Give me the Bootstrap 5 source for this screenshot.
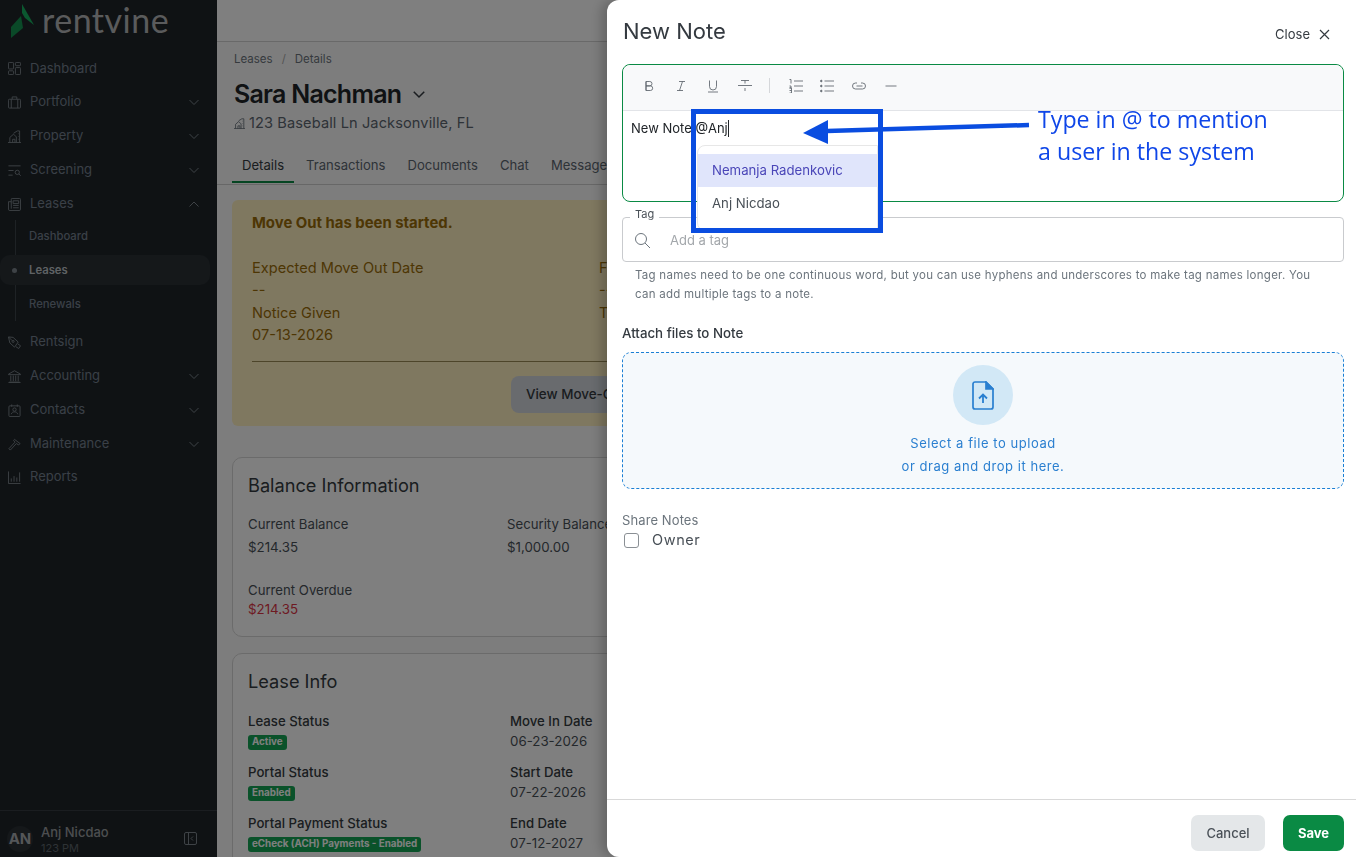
<!DOCTYPE html>
<html lang="en">
<head>
<meta charset="utf-8">
<title>New Note</title>
<link href="https://cdn.jsdelivr.net/npm/bootstrap@5.3.0/dist/css/bootstrap.min.css" rel="stylesheet">
<style>
html,body{height:100%}
body{font-family:Inter,"Liberation Sans",sans-serif;overflow:hidden;background:#fbfbfb;color:#212529;font-size:14px}
.app-shell{height:857px;overflow:hidden}
.side-rail{width:217px;flex:none;background:#1f2529;color:#74808f}
.brand-row{height:40px;padding-left:11px;gap:7px;margin-bottom:12px}
.brand-name{font-family:Lato,sans-serif;font-size:34px;line-height:40px;color:#b4b6b8;font-weight:400;letter-spacing:.5px;margin-top:-1px}
.rail-link{height:34px;padding:0 17px 0 8px;color:#74808f;text-decoration:none;font-size:13px;gap:9px}
.rail-first{height:33px}
.rail-last{height:32px}
.rail-link svg.ico{width:13px;height:13px;flex:none;color:#7c858d}
.rail-link .chev{width:12px;height:12px;margin-left:auto;color:#7c858d}
.rail-sub{position:relative;font-weight:500;margin-top:-2px;margin-bottom:4px}
.rail-sub::before{content:"";position:absolute;left:15px;top:1px;bottom:0;border-left:1px solid #3c444a}
.sub-link{height:34px;padding-left:29px;color:#74808f;text-decoration:none;position:relative;font-size:11.3px}
.sub-on{background:#2a3035;border-radius:10px;margin-right:7px;height:30px;margin-top:2px;margin-bottom:2px;color:#bfc4c9;font-weight:600;z-index:1}
.sub-on::before{content:"";position:absolute;left:12px;top:13px;width:5px;height:5px;border-radius:50%;background:#7c858d}
.rail-foot{border-top:1px solid #343b40;height:47px;padding:8px 20px 0 7px}
.av-round{width:26px;height:26px;border-radius:50%;background:#2a3035;color:#a9adb0;font-weight:700;font-size:15px;flex:none;margin-top:7px}
.who-name{font-size:13px;color:#999da0;line-height:17px;font-weight:500;margin-top:5px}
.who-sub{font-size:11px;color:#5d656b;line-height:15px}
.foot-tog{margin-top:13px;flex:none}
.work-col{min-width:0;background:#fbfbfb}
.top-strip{height:42px;border-bottom:1px solid #d3d3d3;background:#fff;flex:none}
.page-head{padding:10px 15px 0 17px;border-bottom:1px solid #cfcfcf;height:143px;flex:none}
.crumbs{font-size:11.5px;color:#6c757d;line-height:14px;gap:9px}
.crumbs i{font-style:normal;color:#aaa}
.person-name{font-size:25px;font-weight:600;letter-spacing:-.75px;line-height:34px;margin:11px 0 0;gap:11px}
.addr{font-size:14.6px;color:#5c6670;line-height:22px;margin-top:1px;letter-spacing:.1px;gap:4px}
.tab-row{margin-top:20px;gap:0;margin-left:-2px;flex-wrap:nowrap;white-space:nowrap}
.tab-item{padding:0 12px 9px 10px;color:#5c6670;font-size:13.1px;line-height:18px}
.tab-on{border-bottom:2px solid #0a8a44;color:#343a40;height:29px;padding:2px 10px 0;margin-right:2px}
.tab-plain{padding-top:2px}
.notice-box{margin:15px 0 0 15px;background:#fff0c0;border-radius:6px;height:226px;padding:14px 0 14px 20px;color:#9a6c08;width:753px;flex:none;overflow:hidden}
.notice-title{font-weight:700;line-height:18px;margin-bottom:25px;font-size:14.9px}
.notice-grid{width:694px}
.notice-line{line-height:22.4px;font-size:14.6px}
.notice-rule{border-top:1px solid #9a8b55;margin:14px 0;width:700px}
.pale-btn{background:#d2d7dd;color:#343a40;font-size:13.4px;font-weight:500;border-radius:8px;padding:0 15px;height:37px;margin-left:259px;width:150px;white-space:nowrap;line-height:37px;border:0;text-align:left}
.info-panel{margin:31px 0 0 15px;border:1px solid #d7d7d7;border-radius:10px;background:#fff;width:700px;flex:none;padding:15px 15px 18px}
.panel-head{font-size:18.2px;font-weight:400;line-height:24px;margin:0 0 19px;color:#343a40}
.lease-panel .panel-head{margin-bottom:20px}
.lbl{font-size:13.2px;color:#495057;line-height:16px}
.val{font-size:13.3px;color:#495057;line-height:18px}
.val-gap{margin-top:6px}
.val-tight{margin-top:2px}
.bal-col{width:259px;flex:none}
.over-row{margin-top:26px}
.lease-col{width:262px;flex:none}
.lbl-b{font-size:13.2px;font-weight:500;color:#343a40;line-height:16px}
.lbl-next{margin-top:14px}
.val-date{margin-top:3px}
.pill-slot{height:21px}
.green-pill{background:#15a555;color:#fff;font-size:9.8px;font-weight:700;border-radius:3px;padding:0 4px;line-height:14px;height:15px;display:inline-block;white-space:nowrap}
.shade{opacity:.5!important}
.note-panel{width:749px!important;border-left:0!important;border-radius:12px 0 0 12px;box-shadow:-6px 0 12px rgba(0,0,0,.2)}
.note-head{padding:15px 12px 0 16px;height:64px;flex:none}
.note-title{font-size:22px;font-weight:400;line-height:33px;color:#343a40;margin:0}
.close-tx{font-size:13px;color:#343a40;background:none;border:0;padding:0;gap:9px;margin-top:10px;margin-right:14px}
.note-body{padding:0 12px 0 15px;flex:1;position:relative}
.editor-box{border:1px solid #0a8a44;border-radius:8px;height:138px;position:relative}
.edit-bar{height:46px;background:#f8f9fa;border-bottom:1px solid #e2e4e8;border-radius:8px 8px 0 0;padding:0 0 4px 19px;gap:18px}
.edit-bar svg{width:14px;height:14px;color:#5c636a;flex:none;stroke-width:.85}
.edit-bar .edit-ol{margin-right:-1px}
.tool-sep{width:1px;height:15px;background:#d5d7da;margin:0 1px 0 -1px}
.edit-text{padding:8px 8px;font-size:13px;line-height:19px;color:#212529}
.caret-bar{border-left:1px solid #212529;display:inline-block;height:17px;vertical-align:-4px}
.mention-menu{position:absolute;left:74px;top:80px;width:181px;background:#fff;border:1px solid #e7e7e7;border-radius:8px 0 0 8px;padding:8px 0 0;height:86px;z-index:3}
.mention-on{background:#e0e5fb;color:#4a46b8;height:33px;padding-left:14px;font-size:13.2px;line-height:33px}
.mention-off{color:#495057;height:33px;padding-left:14px;font-size:13.2px;line-height:33px}
.tag-set{border:1px solid #c9cbce;border-radius:4px;height:50px;margin-top:10px;padding:0 11px}
.tag-set legend{float:none;width:auto;font-size:11px;line-height:10px;margin:0 0 0 -4px;padding:0 5px;color:#495057;height:10px;position:relative;top:-3px}
.tag-in{font-size:13px;color:#a3a7ab;gap:19px;margin-top:9px;line-height:18px}
.hint-tx{font-size:11.5px;color:#6c757d;line-height:19px;margin:4px 0 0;padding:0 20px 0 13px;letter-spacing:.26px}
.attach-lbl{font-size:13.3px;font-weight:500;color:#343a40;line-height:18px;margin:20px 0 0}
.drop-area{border:1px dashed #1a7fd4;border-radius:9px;background:#f5f9fc;height:137px;margin-top:10px;color:#2a7fd0;font-size:13px;letter-spacing:.55px;line-height:23px;padding-top:12px}
.drop-orb{width:60px;height:60px;border-radius:50%;background:#d2e8f6;margin-bottom:7px}
.share-lbl{font-size:13px;color:#6c757d;line-height:18px;margin:22px 0 0;letter-spacing:.1px}
.own-row{gap:13px;margin-top:1px;font-size:14.5px;letter-spacing:.6px;color:#495057;line-height:20px;margin-left:2px}
.own-box{width:15px;height:15px;border:1px solid #8a8f94;border-radius:3px;flex:none;background:#fff}
.note-foot{height:58px;border-top:1px solid #d9d9d9;padding:15px 12px 0 0;gap:18px;flex:none}
.btn-quiet{background:#e4e7e9;color:#495057;font-size:13px;font-weight:500;height:36px;width:74px;border:0;border-radius:7px;padding:2px 0 0}
.btn-keep{background:#0a8a44;color:#fff;font-size:13px;font-weight:700;height:36px;width:61px;border:0;border-radius:7px;padding:2px 0 0}
.call-box{position:absolute;left:84px;top:109px;width:192px;height:124px;border:5px solid #0a4de0;z-index:5;pointer-events:none}
.call-arrow{position:absolute;left:190px;top:110px;width:240px;height:40px;z-index:6}
.call-text{position:absolute;left:431px;top:103px;z-index:6;font-family:"Open Sans",sans-serif;font-size:23.2px;font-weight:500;line-height:32px;color:#0f46e8;white-space:nowrap}
</style>
</head>
<body>
<svg width="0" height="0" class="d-block" aria-hidden="true">
<defs>
<symbol id="i-dash" viewBox="0 0 14 14" fill="none" stroke="currentColor"><rect x=".5" y=".5" width="5.5" height="7" rx=".8"/><rect x="8" y=".5" width="5.5" height="3.5" rx=".8"/><rect x=".5" y="9.500" width="5.5" height="4" rx=".8"/><rect x="8" y="6" width="5.5" height="7.5" rx=".8"/></symbol>
<symbol id="i-case" viewBox="0 0 14 14" fill="none" stroke="currentColor"><rect x=".5" y="3.500" width="13" height="9.500" rx="1"/><path d="M4.500 3.500V1h5v2.500M3.500 3.500V13M10.500 3.500V13"/></symbol>
<symbol id="i-prop" viewBox="0 0 14 14" fill="none" stroke="currentColor"><path d="M0 13.500h14M2 13.500V8L6 4.500 9 7.500V13.500M5 13.500V10h2.500v3.500M6 3.500 10 1h2.500v12.500M11 4h.5M11 7h.5M11 10h.5"/></symbol>
<symbol id="i-scr" viewBox="0 0 14 14" fill="none" stroke="currentColor"><path d="M.5 2h13M.5 7H6M.5 12H5"/><circle cx="10" cy="9" r="2.300"/><path d="m11.700 10.700 2 2"/></symbol>
<symbol id="i-lease" viewBox="0 0 14 14" fill="none" stroke="currentColor"><path d="M3.500 11.500V1.500q0-1 1-1h8q1 0 1 1v10.500q0 1.500-1.500 1.500H2q-1.500 0-1.500-1.500V4h3"/><path d="M5.500 3h6v3h-6zM5.500 8h6M5.500 10.500h6"/></symbol>
<symbol id="i-sign" viewBox="0 0 14 14" fill="none" stroke="currentColor"><path d="M.5 1 5.500 1.500 11 6.500 7 12 2 7.500ZM.5 1l4 4M10.500 8.500l3 2-2 3-3-2"/><circle cx="5.500" cy="5.800" r="1.100"/></symbol>
<symbol id="i-bank" viewBox="0 0 14 14" fill="none" stroke="currentColor"><path d="M.5 4.500 7 .8l6.500 3.700v.5H.5zM1.500 13h11M.5 13.500h13M3 6v6M5.700 6v6M8.300 6v6M11 6v6"/></symbol>
<symbol id="i-card" viewBox="0 0 14 14" fill="none" stroke="currentColor"><rect x="1" y="2" width="12" height="11.500" rx="1"/><path d="M4 .5V3M10 .5V3M3.500 11c.5-2 2-2.500 3.500-2.500s3 .5 3.500 2.500"/><circle cx="7" cy="6" r="1.800"/></symbol>
<symbol id="i-ham" viewBox="0 0 14 14" fill="none" stroke="currentColor"><path d="M7 1.500 13 6l-1.500 1.500L9 6 2.500 13 1 11.500 7.500 4.500 6 2.500Z"/></symbol>
<symbol id="i-rep" viewBox="0 0 14 14" fill="none" stroke="currentColor"><path d="M.5.500v13h13M3.500 8v3.500M6.500 5.500v6M9.500 7v4.500M12.500 1.500v10"/></symbol>
<symbol id="i-down" viewBox="0 0 12 12" fill="none" stroke="currentColor"><path d="m1.500 4 4.500 4.500L10.500 4"/></symbol>
<symbol id="i-up" viewBox="0 0 12 12" fill="none" stroke="currentColor"><path d="M1.500 8.500 6 4l4.500 4.500"/></symbol>
</defs>
</svg>

<div class="app-shell d-flex">
  <aside class="side-rail d-flex flex-column">
    <div class="brand-row d-flex align-items-center">
      <svg width="24" height="38" viewBox="0 0 24 38" aria-hidden="true"><path d="M11 3 23 24 14 17 11 12Z" fill="#17b060"/><path d="M0 26 10 15 12 27 0 37Z" fill="#149350"/></svg>
      <div class="brand-name">rentvine</div>
    </div>
    <a class="rail-link rail-first d-flex align-items-center" href="#"><svg class="ico"><use href="#i-dash"/></svg>Dashboard</a>
    <a class="rail-link d-flex align-items-center" href="#"><svg class="ico"><use href="#i-case"/></svg>Portfolio<svg class="chev"><use href="#i-down"/></svg></a>
    <a class="rail-link d-flex align-items-center" href="#"><svg class="ico"><use href="#i-prop"/></svg>Property<svg class="chev"><use href="#i-down"/></svg></a>
    <a class="rail-link d-flex align-items-center" href="#"><svg class="ico"><use href="#i-scr"/></svg>Screening<svg class="chev"><use href="#i-down"/></svg></a>
    <a class="rail-link d-flex align-items-center" href="#"><svg class="ico"><use href="#i-lease"/></svg>Leases<svg class="chev"><use href="#i-up"/></svg></a>
    <div class="rail-sub">
      <a class="sub-link d-flex align-items-center" href="#">Dashboard</a>
      <a class="sub-link sub-on d-flex align-items-center" href="#">Leases</a>
      <a class="sub-link d-flex align-items-center" href="#">Renewals</a>
    </div>
    <a class="rail-link d-flex align-items-center" href="#"><svg class="ico"><use href="#i-sign"/></svg>Rentsign</a>
    <a class="rail-link d-flex align-items-center" href="#"><svg class="ico"><use href="#i-bank"/></svg>Accounting<svg class="chev"><use href="#i-down"/></svg></a>
    <a class="rail-link d-flex align-items-center" href="#"><svg class="ico"><use href="#i-card"/></svg>Contacts<svg class="chev"><use href="#i-down"/></svg></a>
    <a class="rail-link d-flex align-items-center" href="#"><svg class="ico"><use href="#i-ham"/></svg>Maintenance<svg class="chev"><use href="#i-down"/></svg></a>
    <a class="rail-link rail-last d-flex align-items-center" href="#"><svg class="ico"><use href="#i-rep"/></svg>Reports</a>
    <div class="rail-foot mt-auto d-flex gap-2">
      <div class="av-round d-flex align-items-center justify-content-center">AN</div>
      <div class="flex-grow-1"><div class="who-name">Anj Nicdao</div><div class="who-sub">123 PM</div></div>
      <svg class="foot-tog" width="13" height="13" viewBox="0 0 13 13" fill="none" stroke="#7c858d" aria-hidden="true"><rect x=".5" y=".5" width="12" height="12" rx="1.500"/><path d="M4.500.5v12M9 4.500 7 6.500 9 8.500"/></svg>
    </div>
  </aside>

  <main class="work-col flex-grow-1 d-flex flex-column">
    <div class="top-strip"></div>
    <div class="page-head">
      <div class="crumbs d-flex"><span>Leases</span><i>/</i><span>Details</span></div>
      <h1 class="person-name d-flex align-items-center">Sara Nachman <svg width="14" height="14" viewBox="0 0 12 12" fill="none" stroke="#343a40" stroke-width="1.300" aria-hidden="true"><path d="m1.500 4 4.500 4.500L10.500 4"/></svg></h1>
      <div class="addr d-flex align-items-center"><svg width="11" height="11" viewBox="0 0 14 14" color="#5c6670"><use href="#i-prop"/></svg>123 Baseball Ln Jacksonville, FL</div>
      <div class="tab-row d-flex">
        <span class="tab-item tab-on">Details</span>
        <span class="tab-item tab-plain">Transactions</span>
        <span class="tab-item tab-plain">Documents</span>
        <span class="tab-item tab-plain">Chat</span>
        <span class="tab-item tab-plain">Messages</span>
      </div>
    </div>
    <section class="notice-box">
      <div class="notice-title">Move Out has been started.</div>
      <div class="notice-grid row g-0 flex-nowrap">
        <div class="col-6 notice-line">
          <div>Expected Move Out Date</div><div>--</div><div>Notice Given</div><div>07-13-2026</div>
        </div>
        <div class="col-6 notice-line">
          <div>Final Move Out Date</div><div>--</div><div>Tenant Notified</div>
        </div>
      </div>
      <div class="notice-rule"></div>
      <button class="pale-btn" type="button">View Move-Out</button>
    </section>
    <section class="info-panel">
      <h2 class="panel-head">Balance Information</h2>
      <div class="d-flex">
        <div class="bal-col"><div class="lbl">Current Balance</div><div class="val val-gap">$214.35</div></div>
        <div class="bal-col"><div class="lbl">Security Balance</div><div class="val val-gap">$1,000.00</div></div>
      </div>
      <div class="over-row"><div class="lbl">Current Overdue</div><div class="val val-tight text-danger">$214.35</div></div>
    </section>
    <section class="info-panel lease-panel mt-3">
      <h2 class="panel-head">Lease Info</h2>
      <div class="d-flex">
        <div class="lease-col">
          <div class="lbl-b">Lease Status</div><div class="pill-slot"><span class="green-pill">Active</span></div>
          <div class="lbl-b lbl-next">Portal Status</div><div class="pill-slot"><span class="green-pill">Enabled</span></div>
          <div class="lbl-b lbl-next">Portal Payment Status</div><div><span class="green-pill">eCheck (ACH) Payments - Enabled</span></div>
          <div><span class="green-pill">Credit Card Payments - Enabled</span></div>
        </div>
        <div class="bal-col">
          <div class="lbl-b">Move In Date</div><div class="val val-date">06-23-2026</div>
          <div class="lbl-b lbl-next">Start Date</div><div class="val val-date">07-22-2026</div>
          <div class="lbl-b lbl-next">End Date</div><div class="val val-date">07-12-2027</div>
        </div>
      </div>
    </section>
  </main>
</div>

<div class="offcanvas-backdrop fade show shade"></div>

<div class="offcanvas offcanvas-end show note-panel d-flex flex-column" tabindex="-1">
  <div class="note-head d-flex justify-content-between align-items-start">
    <h2 class="note-title">New Note</h2>
    <button class="close-tx d-flex align-items-center" type="button">Close
      <svg width="11" height="11" viewBox="0 0 11 11" stroke="#343a40" stroke-width="1.200" aria-hidden="true"><path d="m1 1 9 9M10 1l-9 9"/></svg>
    </button>
  </div>
  <div class="note-body d-flex flex-column">
    <div class="editor-box">
      <div class="edit-bar d-flex align-items-center">
        <svg viewBox="0 0 14 14" fill="none" stroke="currentColor"><path d="M4 2.500h3.800a2.200 2.200 0 0 1 0 4.400H4zM4 6.900h4.400a2.300 2.300 0 0 1 0 4.600H4zM4 2.500v9"/></svg>
        <svg viewBox="0 0 14 14" fill="none" stroke="currentColor"><path d="M5 2.500h6M3 11.500h6M8.500 2.500l-3 9"/></svg>
        <svg viewBox="0 0 14 14" fill="none" stroke="currentColor"><path d="M3.500 1.500v6a3.500 3.500 0 0 0 7 0v-6M2 13h10"/></svg>
        <svg viewBox="0 0 14 14" fill="none" stroke="currentColor"><path d="M0 6.500h14M3 1.500h8M7 1.500v3M7 9v3"/></svg>
        <span class="tool-sep"></span>
        <svg class="edit-ol" viewBox="0 0 14 14" fill="none" stroke="currentColor"><path d="M5 2h9M5 7h9M5 12h9M.5.500H2v4M.5 7h1.500v2H.5M.5 9h2v5H.5M.5 11.500h2"/></svg>
        <svg viewBox="0 0 14 14" fill="none" stroke="currentColor"><path d="M4.500 2H14M4.500 7H14M4.500 12H14"/><circle cx="1.300" cy="2" r=".8" fill="currentColor"/><circle cx="1.300" cy="7" r=".8" fill="currentColor"/><circle cx="1.300" cy="12" r=".8" fill="currentColor"/></svg>
        <svg viewBox="0 0 14 14" fill="none" stroke="currentColor"><path d="M5 4H3.500a3 3 0 0 0 0 6H10.500a3 3 0 0 0 0-6H9M4.500 7h6"/></svg>
        <svg viewBox="0 0 14 14" fill="none" stroke="currentColor"><path d="M1.500 7h11"/></svg>
      </div>
      <div class="edit-text">New Note @Anj<span class="caret-bar"></span></div>
      <div class="mention-menu">
        <div class="mention-on">Nemanja Radenkovic</div>
        <div class="mention-off">Anj Nicdao</div>
      </div>
    </div>
    <fieldset class="tag-set">
      <legend>Tag</legend>
      <div class="tag-in d-flex align-items-center">
        <svg width="17" height="17" viewBox="0 0 17 17" fill="none" stroke="#6c757d" aria-hidden="true"><circle cx="7" cy="7" r="5.500"/><path d="m11 11 5 5"/></svg>
        <span>Add a tag</span>
      </div>
    </fieldset>
    <p class="hint-tx">Tag names need to be one continuous word, but you can use hyphens and underscores to make tag names longer. You can add multiple tags to a note.</p>
    <div class="attach-lbl">Attach files to Note</div>
    <div class="drop-area d-flex flex-column align-items-center text-center">
      <div class="drop-orb d-flex align-items-center justify-content-center">
        <svg width="22" height="29" viewBox="0 0 22 29" fill="none" stroke="#2a7fd0" stroke-width="1.700" aria-hidden="true"><path d="M3 1h11l7 7v18a2 2 0 0 1-2 2H3a2 2 0 0 1-2-2V3a2 2 0 0 1 2-2Z"/><path d="M14 1l7 7h-7z" fill="#2a7fd0"/><path d="M11 22v-8M7 17.500l4-4 4 4" stroke-width="1.800"/></svg>
      </div>
      <div>Select a file to upload</div>
      <div>or drag and drop it here.</div>
    </div>
    <div class="share-lbl">Share Notes</div>
    <div class="own-row d-flex align-items-center"><span class="own-box"></span><span>Owner</span></div>
  </div>
  <div class="note-foot d-flex justify-content-end">
    <button class="btn-quiet" type="button">Cancel</button>
    <button class="btn-keep" type="button">Save</button>
  </div>
  <div class="call-box"></div>
  <svg class="call-arrow" viewBox="0 0 240 40" aria-hidden="true"><path d="M232 15 30 21" stroke="#0a4de0" stroke-width="4.500" fill="none"/><path d="M6 23 31 10V34Z" fill="#0a4de0"/></svg>
  <div class="call-text">Type in @ to mention<br>a user in the system</div>
</div>
</body>
</html>
